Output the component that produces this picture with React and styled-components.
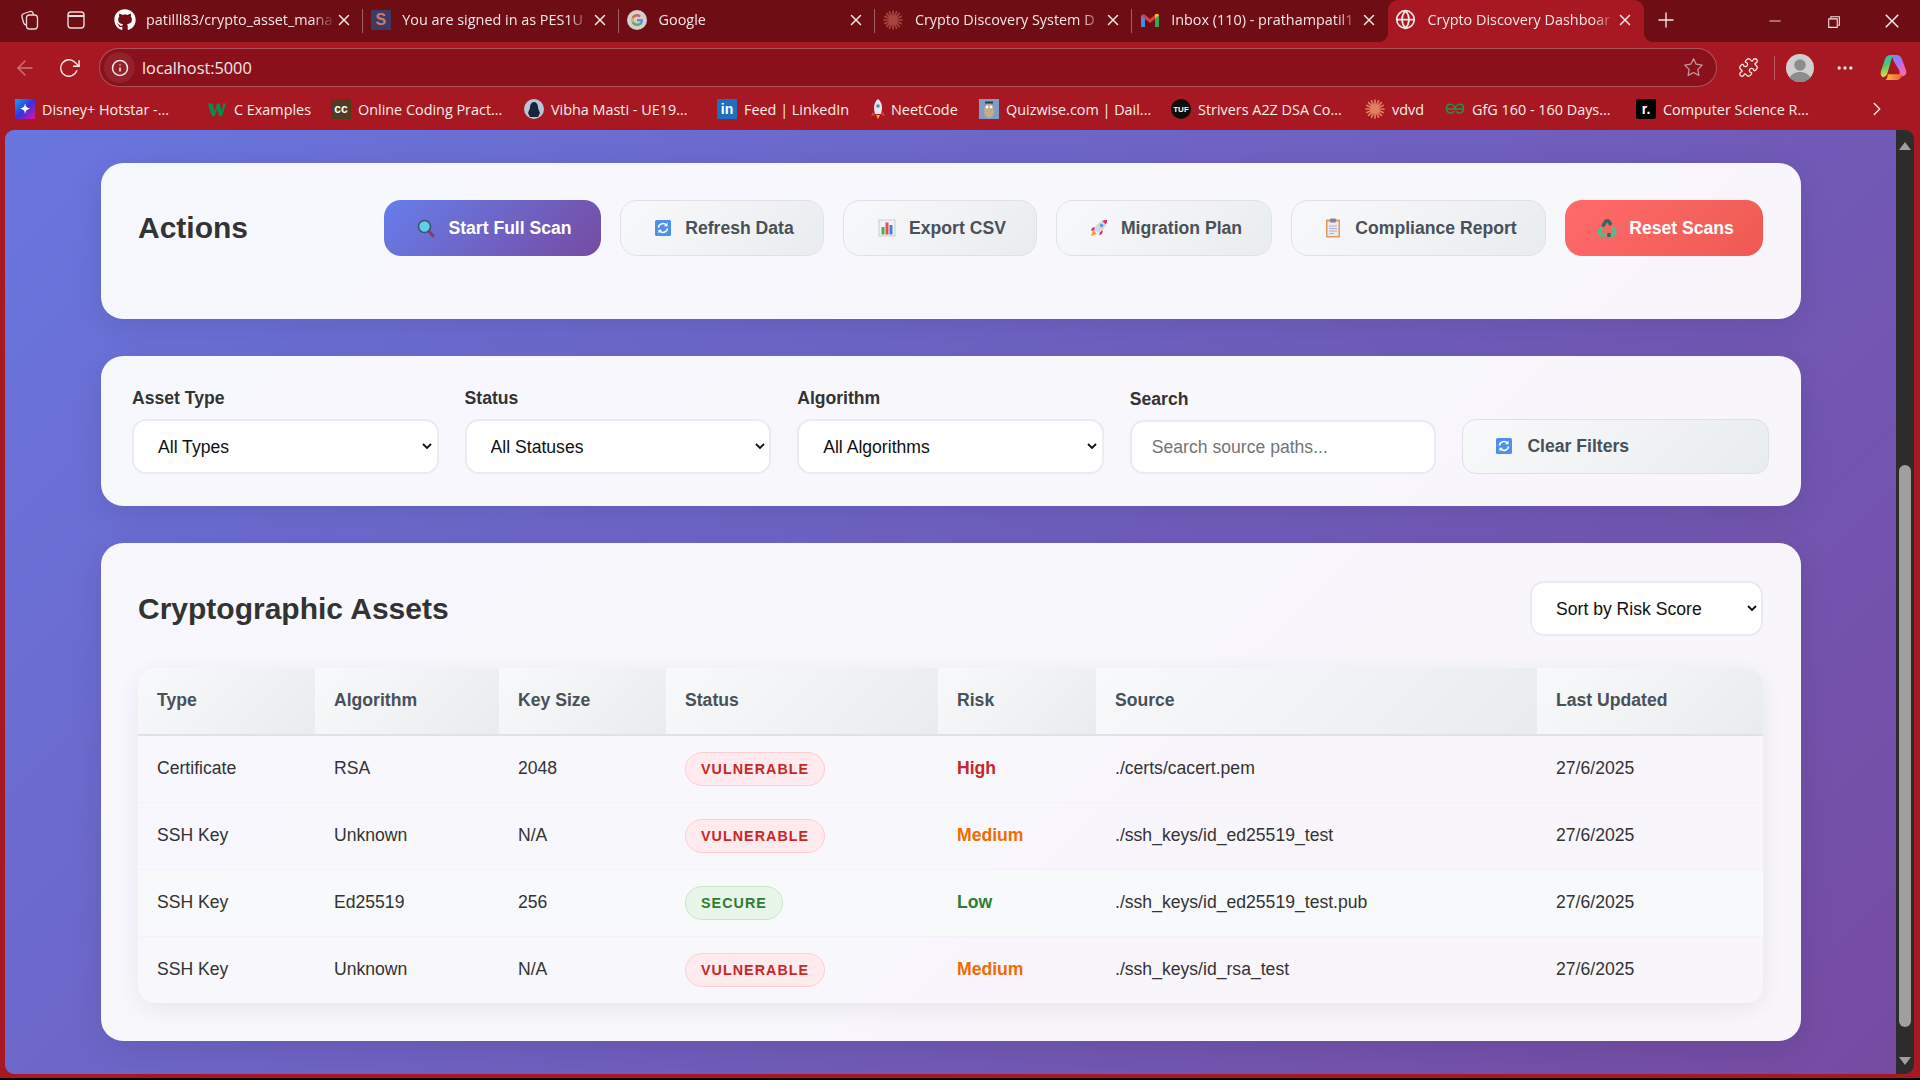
import styled, { createGlobalStyle } from "styled-components";
import { FiX, FiPlus, FiMinus, FiArrowLeft, FiRotateCw, FiInfo, FiStar, FiChevronRight, FiGlobe, FiMoreHorizontal } from "react-icons/fi";
import { FaGithub } from "react-icons/fa";
import { VscChromeRestore, VscChromeClose } from "react-icons/vsc";
import { Puzzle } from "lucide-react";

const GlobalStyle = createGlobalStyle`
    html, body {
        margin: 0;
        padding: 0;
        overflow: hidden;
        background: #a81822;
    }
    * {
        box-sizing: border-box;
    }
`;

const SearchIcon = () => (
    <svg width="20" height="20" viewBox="0 0 20 20">
        <line x1="12" y1="12" x2="17" y2="18" stroke="#8a3a6a" strokeWidth="3" strokeLinecap="round" />
        <circle cx="8.5" cy="8.5" r="6" fill="#5fd0e6" stroke="#3d5170" strokeWidth="1.6" />
    </svg>
);

const RefreshIcon = () => (
    <svg width="18" height="18" viewBox="0 0 18 18">
        <rect x="1" y="1" width="16" height="16" rx="1.5" fill="#4f8fec" />
        <path d="M4.5 8.5a4.5 4.5 0 0 1 8-2.2M13.5 9.5a4.5 4.5 0 0 1-8 2.2" fill="none" stroke="#fff" strokeWidth="1.6" />
        <path d="M13.6 3.6v3.6H10zM4.4 14.4v-3.6H8z" fill="#fff" />
    </svg>
);

const ChartIcon = () => (
    <svg width="18" height="18" viewBox="0 0 18 18">
        <rect x="1" y="1" width="16" height="16" fill="#f2f2f2" stroke="#c9ccd2" />
        <rect x="3.5" y="8" width="3" height="7.5" fill="#4caf50" />
        <rect x="7.5" y="3.5" width="3" height="12" fill="#e04f5f" />
        <rect x="11.5" y="6" width="3" height="9.5" fill="#3f83d8" />
    </svg>
);

const RocketIcon = () => (
    <svg width="20" height="20" viewBox="0 0 20 20">
        <path d="M2 18l2-6 4 4z" fill="#f59a3c" />
        <path d="M6 9L3 10l-1 3 4-1zM11 14l-1 3 3-1 1-4z" fill="#e8246f" />
        <path d="M5 11C8 5 13 2 18 2c0 5-3 10-9 13z" fill="#d9d4dd" />
        <path d="M18 2c-2 0-3.5.4-4.6 1l3.5 3.5C17.5 5.4 18 4 18 2z" fill="#e8246f" />
        <circle cx="12.5" cy="7.5" r="1.8" fill="#5b9be0" />
    </svg>
);

const ClipboardIcon = () => (
    <svg width="18" height="20" viewBox="0 0 18 20">
        <rect x="2" y="1.5" width="14" height="18" rx="1" fill="#dd9a5c" />
        <rect x="3.5" y="3.5" width="11" height="14.5" fill="#ece9f1" />
        <rect x="6" y="0.5" width="6" height="4" rx="1" fill="#8a7f96" />
        <path d="M5 8h8M5 10.5h8M5 13h8M5 15.5h5" stroke="#b4aec4" strokeWidth="1" />
    </svg>
);

const RecycleIcon = () => (
    <svg width="20" height="20" viewBox="0 0 20 20" fill="none" strokeWidth="3.4" strokeLinejoin="round">
        <path d="M5.5 8.5L9 3h2.500l2.500 4" stroke="#2d6b5e" />
        <path d="M15.500 9l2.500 5-2 3h-3.500" stroke="#42c48e" />
        <path d="M9.500 17H4l-2-3 2.800-4.500" stroke="#42c48e" />
        <path d="M12 15v4" stroke="#2d6b5e" />
    </svg>
);

const CopilotIcon = () => (
    <svg width="29" height="29" viewBox="0 0 30 30">
        <defs>
            <linearGradient id="cpA" x1="0" y1="0" x2="0.3" y2="1">
                <stop offset="0" stopColor="#2bb6f3" />
                <stop offset="0.5" stopColor="#47c96b" />
                <stop offset="1" stopColor="#f5d742" />
            </linearGradient>
            <linearGradient id="cpB" x1="0" y1="0" x2="0.5" y2="1">
                <stop offset="0" stopColor="#4f9df5" />
                <stop offset="0.5" stopColor="#b76cf0" />
                <stop offset="1" stopColor="#ef6fae" />
            </linearGradient>
            <linearGradient id="cpC" x1="0" y1="0" x2="1" y2="0">
                <stop offset="0" stopColor="#f7c13c" />
                <stop offset="1" stopColor="#ef5b3c" />
            </linearGradient>
        </defs>
        <path d="M15 2h3c3 0 5 2 6 5l4 11c1 3-1 6-4 6h-6c3 0 4-3 3-6L15 8c-.7-3-2-5 0-6z" fill="url(#cpB)" />
        <path d="M9 22h15c0 2-2 6-6 6H6c2 0 3-3 3-6z" fill="url(#cpC)" />
        <path d="M12 2h6c-3 0-4.500 2-5.300 5L9 20c-.5 2-2 5-5 5-2-1-3-3-2-6L6 7c1-3 3-5 6-5z" fill="url(#cpA)" />
    </svg>
);

const StarBurst = ({ color, size = 20 }) => (
    <svg width={size} height={size} viewBox="0 0 20 20" stroke={color} strokeWidth="1.7" strokeLinecap="round">
        <path d="M10 1v18M1 10h18M3.6 3.6l12.800 12.800M16.400 3.600L3.600 16.400M6.500 1.800l7 16.400M13.500 1.800l-7 16.400M1.800 6.500l16.400 7M18.200 6.500L1.800 13.500" />
    </svg>
);

const SiteBadge = styled.span`
    width: 20px;
    height: 20px;
    flex: none;
    display: flex;
    align-items: center;
    justify-content: center;
    background: ${(p) => p.$bg || "transparent"};
    color: ${(p) => p.$color || "#fff"};
    border-radius: ${(p) => p.$radius || "0"};
    font-family: "Liberation Sans", sans-serif;
    font-size: ${(p) => p.$font || 12}px;
    font-weight: bold;
`;

const GoogleIcon = () => (
    <svg width="20" height="20" viewBox="0 0 20 20">
        <circle cx="10" cy="10" r="10" fill="#d4cfcf" />
        <path d="M16 10.300c0-.5 0-.9-.1-1.300H10v2.400h3.400c-.2.900-.7 1.500-1.400 2l2 1.500c1.300-1.100 2-2.700 2-4.600z" fill="#6b8fd0" />
        <path d="M10 16c1.700 0 3-.5 4-1.600l-2-1.500c-.5.400-1.200.6-2 .6-1.500 0-2.900-1-3.300-2.400l-2 1.600C5.600 14.700 7.700 16 10 16z" fill="#6aa56f" />
        <path d="M6.700 11.100c-.2-.7-.2-1.500 0-2.200l-2-1.600c-.9 1.700-.9 3.700 0 5.400z" fill="#d9b44f" />
        <path d="M10 6.500c.9 0 1.600.3 2.200.9l1.700-1.700C12.900 4.600 11.500 4 10 4 7.700 4 5.600 5.300 4.700 7.300l2 1.600C7.100 7.500 8.500 6.500 10 6.500z" fill="#c96a5c" />
    </svg>
);

const GmailIcon = () => (
    <svg width="20" height="18" viewBox="0 0 20 18">
        <path d="M1 16V4.500L4 3l6 5 6-5 3 1.500V16h-4V8l-5 4-5-4v8z" fill="#d9403a" />
        <path d="M1 4.500V16h4V7.500z" fill="#4a88e8" />
        <path d="M15 7.500V16h4V4.500z" fill="#35a853" />
        <path d="M15 3.500V7.500l4-3c0-1.500-2-2.500-4-1z" fill="#f5bc1c" />
    </svg>
);

const AvatarIcon = () => (
    <svg width="28" height="28" viewBox="0 0 28 28">
        <circle cx="14" cy="14" r="14" fill="#cfcfcf" />
        <circle cx="14" cy="11" r="5.800" fill="#8c8c8c" />
        <path d="M3.600 23.500C6 19.500 10 18 14 18s8 1.500 10.400 5.500A14 14 0 0 1 3.600 23.500z" fill="#8c8c8c" />
    </svg>
);

const WIcon = () => (
    <svg width="22" height="20" viewBox="0 0 22 20">
        <path d="M1 4h5l2.500 9L11 4h3l2 9 2-9h3l-4.500 14h-3L11 10l-2.500 8h-3z" fill="#0f8a4f" />
    </svg>
);

const RocketBookmark = () => (
    <svg width="18" height="22" viewBox="0 0 18 22">
        <path d="M4 14l-2 4 4-1zM14 14l2 4-4-1z" fill="#e0463c" />
        <path d="M9 1c3 2 4 6 4 9 0 2-.5 4-1 6H6c-.5-2-1-4-1-6 0-3 1-7 4-9z" fill="#e8e8ec" />
        <circle cx="9" cy="8" r="1.800" fill="#4a86c8" />
        <path d="M7 17h4l-2 4z" fill="#f5a742" />
    </svg>
);

const OwlIcon = () => (
    <svg width="20" height="20" viewBox="0 0 20 20">
        <rect width="20" height="20" fill="#7f9ccb" />
        <ellipse cx="10" cy="12" rx="5" ry="7" fill="#c7ad87" />
        <rect x="6" y="2.500" width="8" height="2" fill="#3a3a3a" />
        <circle cx="8" cy="8" r="1.400" fill="#fff" />
        <circle cx="12" cy="8" r="1.400" fill="#fff" />
    </svg>
);

const VibhaAvatar = () => (
    <svg width="20" height="20" viewBox="0 0 20 20">
        <circle cx="10" cy="10" r="10" fill="#b6c7d8" />
        <path d="M6 8c0-3 2-5 4-5s4 2 4 5c0 2 1 3 2 6l-2 4H6l-2-4c1-3 2-4 2-6z" fill="#17263c" />
    </svg>
);

const GfgIcon = () => (
    <svg width="20" height="12" viewBox="0 0 20 12" fill="none" stroke="#2f8d46" strokeWidth="1.500">
        <path d="M1 6h18M10 6c-1-6-8-6-8.500-1S7 12 9 8M10 6c1-6 8-6 8.500-1S13 12 11 8" />
    </svg>
);

const DisneyBadge = styled(SiteBadge)`
    background-image: linear-gradient(135deg, #0aa6f5, #3b2fe0 50%, #e0149a);
`;

const tabs = [
    { title: "patilll83/crypto_asset_mana", icon: <FaGithub size={22} color="#fff" /> },
    { title: "You are signed in as PES1U", icon: <SiteBadge $bg="#3f3a63" $color="#c97a72" $font={16}>S</SiteBadge> },
    { title: "Google", icon: <GoogleIcon /> },
    { title: "Crypto Discovery System D", icon: <StarBurst color="#a8453e" /> },
    { title: "Inbox (110) - prathampatil1", icon: <GmailIcon />, noSeparator: true },
];

const bookmarks = [
    { w: 192, label: "Disney+ Hotstar -...", icon: <DisneyBadge $font={12}>✦</DisneyBadge> },
    { w: 124, label: "C Examples", icon: <WIcon /> },
    { w: 193, label: "Online Coding Pract...", icon: <SiteBadge $bg="#533a24" $font={12}>cc</SiteBadge> },
    { w: 193, label: "Vibha Masti - UE19...", icon: <VibhaAvatar /> },
    { w: 151, label: "Feed | LinkedIn", icon: <SiteBadge $bg="#1f6fc0" $font={14}>in</SiteBadge> },
    { w: 111, label: "NeetCode", icon: <RocketBookmark />, tight: true },
    { w: 192, label: "Quizwise.com | Dail...", icon: <OwlIcon /> },
    { w: 194, label: "Strivers A2Z DSA Co...", icon: <SiteBadge $bg="#0d0d0d" $radius="50%" $font={8}>TUF</SiteBadge> },
    { w: 80, label: "vdvd", icon: <StarBurst color="#e0805f" /> },
    { w: 191, label: "GfG 160 - 160 Days...", icon: <GfgIcon /> },
    { w: 230, label: "Computer Science R...", icon: <SiteBadge $bg="#000" $radius="2px" $font={14}>r.</SiteBadge> },
];

const actions = [
    { label: "Start Full Scan", icon: <SearchIcon />, kind: "primary", w: 217 },
    { label: "Refresh Data", icon: <RefreshIcon />, w: 204 },
    { label: "Export CSV", icon: <ChartIcon />, w: 194 },
    { label: "Migration Plan", icon: <RocketIcon />, w: 216 },
    { label: "Compliance Report", icon: <ClipboardIcon />, w: 255 },
    { label: "Reset Scans", icon: <RecycleIcon />, kind: "danger", w: 198 },
];

const filters = [
    { label: "Asset Type", value: "All Types" },
    { label: "Status", value: "All Statuses" },
    { label: "Algorithm", value: "All Algorithms" },
];

const columns = [
    { name: "Type", w: 177 },
    { name: "Algorithm", w: 184 },
    { name: "Key Size", w: 167 },
    { name: "Status", w: 272 },
    { name: "Risk", w: 158 },
    { name: "Source", w: 441 },
    { name: "Last Updated", w: 226 },
];

const assets = [
    { type: "Certificate", algo: "RSA", size: "2048", status: "vulnerable", risk: "High", source: "./certs/cacert.pem" },
    { type: "SSH Key", algo: "Unknown", size: "N/A", status: "vulnerable", risk: "Medium", source: "./ssh_keys/id_ed25519_test" },
    { type: "SSH Key", algo: "Ed25519", size: "256", status: "secure", risk: "Low", source: "./ssh_keys/id_ed25519_test.pub", hovered: true },
    { type: "SSH Key", algo: "Unknown", size: "N/A", status: "vulnerable", risk: "Medium", source: "./ssh_keys/id_rsa_test" },
];

export default function App() {
    return (
        <Window>
            <GlobalStyle />
            <TabStrip>
                <WindowTool><CollectionsGlyph /></WindowTool>
                <WindowTool><TabsGlyph /></WindowTool>
                <Tabs>
                    {tabs.map((tab) => (
                        <Tab key={tab.title} $noSeparator={tab.noSeparator}>
                            <TabIcon>{tab.icon}</TabIcon>
                            <TabTitle>{tab.title}</TabTitle>
                            <FiX size={18} />
                        </Tab>
                    ))}
                    <ActiveTab>
                        <TabIcon><FiGlobe size={21} /></TabIcon>
                        <TabTitle>Crypto Discovery Dashboar</TabTitle>
                        <FiX size={18} />
                    </ActiveTab>
                    <NewTab><FiPlus size={24} strokeWidth={1.4} /></NewTab>
                </Tabs>
                <WindowControls>
                    <FiMinus size={18} strokeWidth={1.2} />
                    <VscChromeRestore size={17} />
                    <VscChromeClose size={20} />
                </WindowControls>
            </TabStrip>

            <Toolbar>
                <BackButton><FiArrowLeft size={24} strokeWidth={1.4} /></BackButton>
                <ToolButton><FiRotateCw size={22} strokeWidth={1.6} /></ToolButton>
                <AddressBar>
                    <InfoChip><FiInfo size={18} /></InfoChip>
                    <AddressText>localhost:5000</AddressText>
                    <StarSlot><FiStar size={21} strokeWidth={1.4} /></StarSlot>
                </AddressBar>
                <PuzzleSlot $w={57}><Puzzle size={21} strokeWidth={1.5} /></PuzzleSlot>
                <ToolDivider />
                <ToolSlot $w={50}><AvatarIcon /></ToolSlot>
                <ToolSlot $w={40}><FiMoreHorizontal size={20} /></ToolSlot>
                <ToolSlot $w={56}><CopilotIcon /></ToolSlot>
            </Toolbar>

            <BookmarkBar>
                {bookmarks.map((b) => (
                    <Bookmark key={b.label} $w={b.w}>
                        <BookmarkIcon $tight={b.tight}>{b.icon}</BookmarkIcon>
                        <span>{b.label}</span>
                    </Bookmark>
                ))}
                <MoreBookmarks><FiChevronRight size={22} strokeWidth={1.5} /></MoreBookmarks>
            </BookmarkBar>

            <Viewport>
                <Page>
                    <ActionsCard>
                        <CardTitle>Actions</CardTitle>
                        <ActionRow>
                            {actions.map((a) => (
                                <ActionButton key={a.label} $kind={a.kind} $w={a.w}>
                                    <ButtonIcon>{a.icon}</ButtonIcon>
                                    {a.label}
                                </ActionButton>
                            ))}
                        </ActionRow>
                    </ActionsCard>

                    <FiltersCard>
                        {filters.map((f) => (
                            <FilterGroup key={f.label}>
                                <FilterLabel>{f.label}</FilterLabel>
                                <SelectBox defaultValue={f.value}>
                                    <option>{f.value}</option>
                                </SelectBox>
                            </FilterGroup>
                        ))}
                        <FilterGroup>
                            <FilterLabel>Search</FilterLabel>
                            <SearchInput placeholder="Search source paths..." />
                        </FilterGroup>
                        <ClearButton>
                            <ClearIcon><RefreshIcon /></ClearIcon>
                            Clear Filters
                        </ClearButton>
                    </FiltersCard>

                    <AssetsCard>
                        <AssetsHeader>
                            <CardTitle>Cryptographic Assets</CardTitle>
                            <SortSelect defaultValue="Sort by Risk Score">
                                <option>Sort by Risk Score</option>
                            </SortSelect>
                        </AssetsHeader>
                        <TableWrap>
                            <AssetTable>
                                <colgroup>
                                    {columns.map((c) => <col key={c.name} width={c.w} />)}
                                </colgroup>
                                <thead>
                                    <tr>
                                        {columns.map((c) => <HeadCell key={c.name}>{c.name}</HeadCell>)}
                                    </tr>
                                </thead>
                                <tbody>
                                    {assets.map((a) => (
                                        <Row key={a.source} $hovered={a.hovered}>
                                            <Cell>{a.type}</Cell>
                                            <Cell>{a.algo}</Cell>
                                            <Cell>{a.size}</Cell>
                                            <Cell><StatusBadge $status={a.status}>{a.status}</StatusBadge></Cell>
                                            <Cell><RiskText $risk={a.risk}>{a.risk}</RiskText></Cell>
                                            <Cell>{a.source}</Cell>
                                            <Cell>27/6/2025</Cell>
                                        </Row>
                                    ))}
                                </tbody>
                            </AssetTable>
                        </TableWrap>
                    </AssetsCard>
                </Page>
                <Scrollbar>
                    <ScrollArrow $up />
                    <ScrollTrack><ScrollThumb /></ScrollTrack>
                    <ScrollArrow />
                </Scrollbar>
            </Viewport>
            <BottomEdge />
        </Window>
    );
}

const CollectionsGlyph = () => (
    <svg width="22" height="22" viewBox="0 0 22 22" fill="none" stroke="#e8dcdc" strokeWidth="1.3">
        <rect x="6.5" y="6" width="11" height="14" rx="3" />
        <path d="M6.5 16c-2 0-2.500-1-3-2.500L2 8c-.5-2 .5-3 2-3.500l6-2c2-.5 3 .5 3.500 3.500" />
    </svg>
);

const TabsGlyph = () => (
    <svg width="20" height="20" viewBox="0 0 20 20" fill="none" stroke="#e8dcdc" strokeWidth="1.4">
        <rect x="2" y="2" width="16" height="16" rx="3" />
        <path d="M2 6h16" strokeWidth="2" />
    </svg>
);

const Window = styled.div`
    width: 1920px;
    height: 1080px;
    display: flex;
    flex-direction: column;
    background: #a81822;
    overflow: hidden;
`;

const TabStrip = styled.div`
    height: 42px;
    flex: none;
    display: flex;
    background: #6f0d15;
    color: #f3e6e6;
    font-family: "Open Sans", sans-serif;
    font-size: 14.4px;
`;

const WindowTool = styled.div`
    width: 45px;
    display: flex;
    align-items: center;
    justify-content: center;
    padding-bottom: 3px;
    &:first-child {
        margin-left: 8px;
    }
`;

const Tabs = styled.div`
    margin-left: 8.5px;
    flex: 1;
    display: flex;
`;

const Tab = styled.div`
    width: 256.3px;
    display: flex;
    align-items: center;
    padding: 0 10px 3px 6px;
    position: relative;
    svg {
        flex: none;
    }
    &::after {
        content: "";
        display: ${(p) => p.$noSeparator ? "none" : "block"};
        position: absolute;
        right: 0;
        top: 9px;
        bottom: 9px;
        width: 1px;
        background: rgba(255, 255, 255, 0.35);
    }
`;

const ActiveTab = styled(Tab)`
    background: #a81822;
    border-radius: 10px 10px 0 0;
    &::after {
        display: block;
        top: auto;
        bottom: 0;
        right: -10px;
        width: 10px;
        height: 10px;
        background: radial-gradient(circle at 100% 0, transparent 10px, #a81822 10.5px);
    }
    &::before {
        content: "";
        position: absolute;
        bottom: 0;
        left: -10px;
        width: 10px;
        height: 10px;
        background: radial-gradient(circle at 0 0, transparent 10px, #a81822 10.5px);
    }
`;

const TabIcon = styled.span`
    width: 24px;
    flex: none;
    margin-right: 9.5px;
    display: flex;
    align-items: center;
    justify-content: center;
`;

const TabTitle = styled.span`
    flex: 1;
    min-width: 0;
    white-space: nowrap;
    overflow: hidden;
    -webkit-mask-image: linear-gradient(to right, #000 88%, transparent);
    mask-image: linear-gradient(to right, #000 88%, transparent);
`;

const NewTab = styled.div`
    width: 44px;
    display: flex;
    align-items: center;
    justify-content: center;
    padding-bottom: 3px;
`;

const WindowControls = styled.div`
    width: 174px;
    flex: none;
    display: flex;
    align-items: center;
    justify-content: space-between;
    padding: 0 18px 0 20px;
`;

const Toolbar = styled.div`
    height: 46px;
    flex: none;
    padding: 6px 0 0 0;
    display: flex;
    align-items: flex-start;
    color: #f6e9e9;
`;

const ToolButton = styled.div`
    width: 45px;
    height: 39px;
    flex: none;
    display: flex;
    align-items: center;
    justify-content: center;
    margin-left: -1px;
`;

const BackButton = styled(ToolButton)`
    margin-left: 2px;
    opacity: 0.45;
`;

const AddressBar = styled.div`
    margin-left: 8px;
    width: 1618px;
    height: 39px;
    flex: none;
    display: flex;
    align-items: center;
    background: #8a111b;
    border: 1px solid rgba(255, 255, 255, 0.28);
    border-radius: 20px;
    padding-left: 4px;
`;

const InfoChip = styled.div`
    width: 31px;
    height: 31px;
    border-radius: 50%;
    background: rgba(255, 255, 255, 0.07);
    display: flex;
    align-items: center;
    justify-content: center;
`;

const AddressText = styled.span`
    margin-left: 7px;
    flex: 1;
    font-family: "Open Sans", sans-serif;
    font-size: 16.3px;
    color: #f5e8e8;
`;

const StarSlot = styled.div`
    width: 46px;
    display: flex;
    justify-content: center;
    color: #c49a9d;
`;

const ToolSlot = styled.div`
    width: ${(p) => p.$w}px;
    height: 39px;
    flex: none;
    display: flex;
    align-items: center;
    justify-content: center;
`;

const PuzzleSlot = styled(ToolSlot)`
    padding-left: 5px;
`;

const ToolDivider = styled.div`
    width: 1px;
    height: 24px;
    margin-top: 8px;
    flex: none;
    background: rgba(255, 255, 255, 0.3);
`;

const BookmarkBar = styled.div`
    height: 42px;
    flex: none;
    padding: 0 0 0 15px;
    display: flex;
    align-items: center;
    color: #f7eded;
    font-family: "Open Sans", sans-serif;
    font-size: 14.4px;
`;

const Bookmark = styled.div`
    width: ${(p) => p.$w}px;
    flex: none;
    display: flex;
    align-items: center;
    white-space: nowrap;
`;

const BookmarkIcon = styled.span`
    width: 20px;
    flex: none;
    margin-right: ${(p) => p.$tight ? 3 : 7}px;
    display: flex;
    align-items: center;
    justify-content: center;
`;

const MoreBookmarks = styled.div`
    flex: 1;
    display: flex;
    justify-content: flex-start;
`;

const Viewport = styled.div`
    flex: 1;
    min-height: 0;
    margin-left: 5px;
    margin-right: 6px;
    display: flex;
    border-radius: 9px;
    overflow: hidden;
`;

/* page is scrolled to the bottom, so the body gradient runs past the top of the viewport */
const Page = styled.main`
    flex: 1;
    min-width: 0;
    padding: 33px 95px 0 96px;
    display: flex;
    flex-direction: column;
    gap: 37px;
    background: linear-gradient(135deg, #667eea 0%, #764ba2 100%) left bottom / 100% 1490px no-repeat;
    font-family: "Liberation Sans", Arial, sans-serif;
    color: #333;
    overflow: hidden;
`;

const Card = styled.section`
    flex: none;
    background: rgba(255, 255, 255, 0.95);
    border-radius: 22px;
    box-shadow: 0 8px 32px rgba(0, 0, 0, 0.1);
`;

const ActionsCard = styled(Card)`
    height: 156px;
    padding: 37px 38px 0 37px;
    display: flex;
    justify-content: space-between;
    align-items: flex-start;
`;

const CardTitle = styled.h2`
    margin: 0;
    font-size: 30px;
    font-weight: bold;
    line-height: 56px;
    color: #333;
`;

const ActionRow = styled.div`
    display: flex;
    gap: 19px;
`;

const ActionButton = styled.button`
    width: ${(p) => p.$w}px;
    height: 56px;
    padding: 0 0 0 2px;
    display: flex;
    align-items: center;
    justify-content: center;
    font-family: inherit;
    font-size: 17.6px;
    font-weight: bold;
    border-radius: 17px;
    border: ${(p) => p.$kind ? "none" : "1px solid #dee2e6"};
    color: ${(p) => p.$kind ? "#fff" : "#495057"};
    background: ${(p) => p.$kind === "primary"
        ? "linear-gradient(135deg, #667eea, #764ba2)"
        : p.$kind === "danger"
            ? "linear-gradient(135deg, #ff6b6b, #ee5a52)"
            : "linear-gradient(135deg, #f8f9fa, #e9ecef)"};
`;

const ButtonIcon = styled.span`
    width: 22px;
    flex: none;
    margin-right: 11px;
    display: flex;
    align-items: center;
    justify-content: center;
`;

const ClearIcon = styled(ButtonIcon)`
    margin-right: 12px;
`;

const FiltersCard = styled(Card)`
    height: 150px;
    padding: 32px 32px 32px 31px;
    display: grid;
    grid-template-columns: repeat(5, 1fr);
    column-gap: 26px;
    align-items: end;
`;

const FilterGroup = styled.div`
    display: flex;
    flex-direction: column;
`;

const FilterLabel = styled.label`
    font-size: 17.6px;
    font-weight: bold;
    line-height: 20px;
    margin-bottom: 11px;
    color: #333;
`;

const SelectBox = styled.select`
    width: 100%;
    height: 55px;
    padding: 0 0 0 24px;
    font-family: inherit;
    font-size: 17.6px;
    color: #111;
    appearance: none;
    background: #fff url("data:image/svg+xml,%3Csvg xmlns='http://www.w3.org/2000/svg' width='10' height='7' viewBox='0 0 10 7'%3E%3Cpath d='M1 1l4 4 4-4' fill='none' stroke='%23111' stroke-width='1.8'/%3E%3C/svg%3E") no-repeat right 4.5px center;
    border: 2px solid #e9ecef;
    border-radius: 14px;
    outline: none;
`;

const SearchInput = styled.input`
    width: 100%;
    height: 54px;
    padding: 0 20px;
    font-family: inherit;
    font-size: 17.6px;
    color: #111;
    background: #fff;
    border: 2px solid #e9ecef;
    border-radius: 14px;
    outline: none;
    &::placeholder {
        color: #757575;
    }
`;

const ClearButton = styled.button`
    height: 55px;
    padding: 0 0 1px 30px;
    display: flex;
    align-items: center;
    font-family: inherit;
    font-size: 17.6px;
    font-weight: bold;
    color: #495057;
    border: 1px solid #dee2e6;
    border-radius: 14px;
    background: linear-gradient(135deg, #f8f9fa, #e9ecef);
`;

const AssetsCard = styled(Card)`
    height: 498px;
    padding: 38px 38px 0 37px;
`;

const AssetsHeader = styled.div`
    height: 55px;
    margin-bottom: 32px;
    display: flex;
    align-items: center;
    justify-content: space-between;
`;

const SortSelect = styled(SelectBox)`
    width: 233px;
    padding-left: 24px;
`;

const TableWrap = styled.div`
    border-radius: 17px;
    overflow: hidden;
    box-shadow: 0 6px 24px rgba(0, 0, 0, 0.07);
`;

const AssetTable = styled.table`
    width: 100%;
    table-layout: fixed;
    border-collapse: collapse;
    font-size: 17.6px;
`;

const HeadCell = styled.th`
    height: 67px;
    padding: 0 19px 2px;
    text-align: left;
    font-weight: bold;
    color: #495057;
    background: linear-gradient(135deg, #f8f9fa, #e9ecef);
    border-bottom: 2px solid #dee2e6;
`;

const Row = styled.tr`
    height: 67px;
    border-bottom: 1px solid #f1f3f5;
    background: ${(p) => p.$hovered ? "#f8f9fa" : "transparent"};
    &:last-child {
        border-bottom: none;
    }
`;

const Cell = styled.td`
    padding: 0 19px;
    color: #333;
    white-space: nowrap;
`;

const statusColors = {
    vulnerable: { text: "#c62828", bg: "#ffebee", border: "#ffcdd2" },
    secure: { text: "#2e7d32", bg: "#e8f5e9", border: "#c8e6c9" },
};

const StatusBadge = styled.span`
    display: inline-block;
    height: 34px;
    line-height: 33px;
    padding: 0 15px;
    font-size: 14.3px;
    font-weight: bold;
    letter-spacing: 1.05px;
    text-transform: uppercase;
    border-radius: 17px;
    color: ${(p) => statusColors[p.$status].text};
    background: ${(p) => statusColors[p.$status].bg};
    border: 1px solid ${(p) => statusColors[p.$status].border};
`;

const riskColors = { High: "#c62828", Medium: "#ef6c00", Low: "#2e7d32" };

const RiskText = styled.span`
    font-weight: bold;
    color: ${(p) => riskColors[p.$risk]};
`;

const Scrollbar = styled.div`
    width: 18px;
    flex: none;
    display: flex;
    flex-direction: column;
    background: #2c2c2c;
`;

const ScrollArrow = styled.div`
    height: ${(p) => p.$up ? 32 : 26}px;
    flex: none;
    display: flex;
    align-items: center;
    justify-content: center;
    &::before {
        content: "";
        border-left: 6.5px solid transparent;
        border-right: 6.5px solid transparent;
        border-bottom: ${(p) => p.$up ? "8px solid #a0a0a0" : "none"};
        border-top: ${(p) => p.$up ? "none" : "8px solid #a0a0a0"};
    }
`;

const ScrollTrack = styled.div`
    flex: 1;
    display: flex;
    flex-direction: column;
    justify-content: flex-end;
    padding: 0 3px 21px;
`;

const ScrollThumb = styled.div`
    height: 562px;
    border-radius: 6px;
    background: #9f9f9f;
`;

const BottomEdge = styled.div`
    height: 6px;
    flex: none;
    border-bottom: 2px solid #000;
`;
